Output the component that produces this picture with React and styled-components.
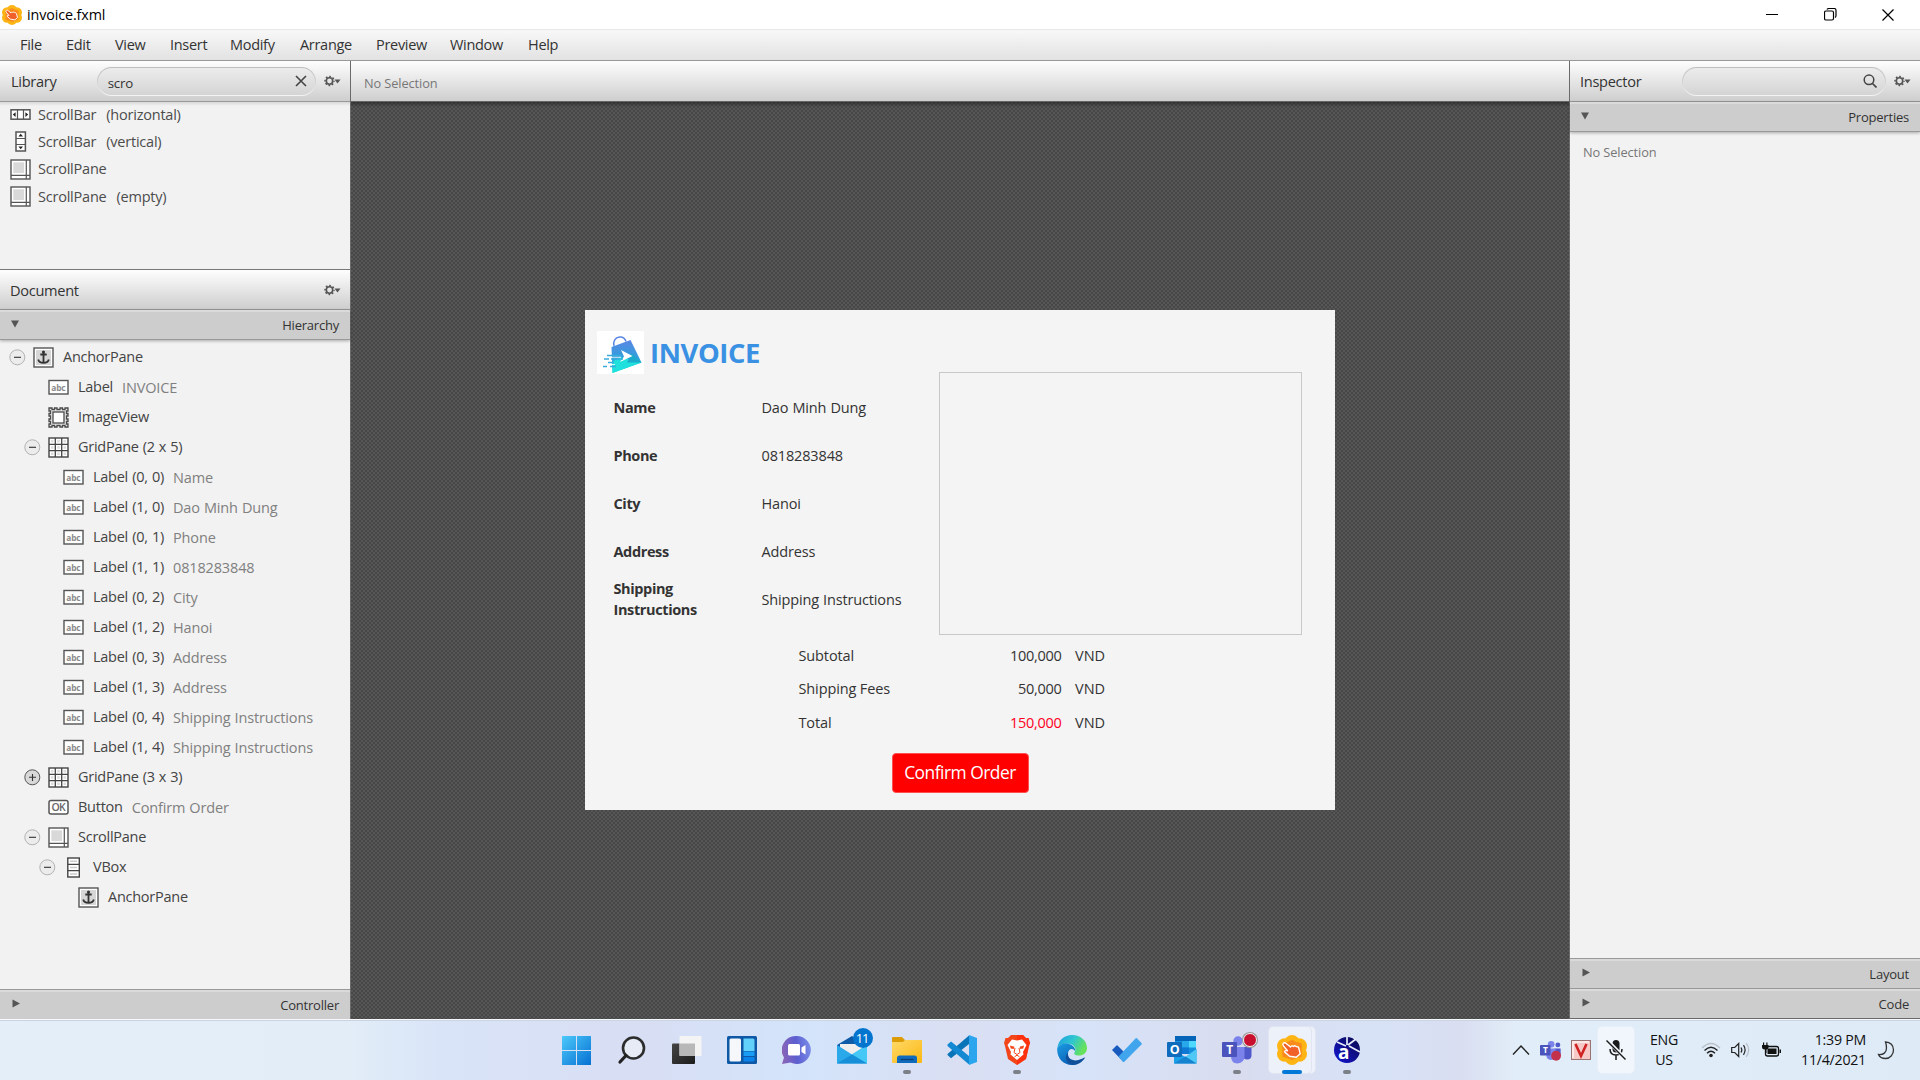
import React from "react";
import styled, { createGlobalStyle } from "styled-components";

const GlobalStyle = createGlobalStyle`
  * { box-sizing: border-box; }
  html, body { margin: 0; padding: 0; background: #fff; }
  body {
    width: 1920px; height: 1080px; overflow: hidden;
    font-family: "Open Sans", "Noto Sans", sans-serif;
    font-size: 14.5px; letter-spacing: -0.35px; color: #444; line-height: 20px;
    white-space: pre;
  }
  svg { display: block; flex: none; }
`;

/* ---------- window frame ---------- */
const Window = styled.div`
  width: 1920px; height: 1080px; display: flex; flex-direction: column;
`;
const TitleBar = styled.header`
  height: 29px; display: flex; align-items: center; background: #fff; color: #000;
  padding-left: 2px; padding-right: 3px; flex: none;
`;
const TitleText = styled.span`
  margin-left: 5px; flex: 1; font-size: 14.3px; letter-spacing: -0.1px; padding-top: 1px;
`;
const CaptionButton = styled.div`
  width: 58px; height: 29px; display: flex; align-items: center; justify-content: center;
`;
const MenuBar = styled.nav`
  height: 32px; flex: none; display: grid; align-items: center;
  grid-template-columns: 46px 49px 55px 60px 70px 76px 74px 78px 60px;
  padding-left: 20px; border-top: 1px solid #e8e8e8; border-bottom: 1px solid #999;
  background: linear-gradient(#f8f8f8, #e2e2e2); color: #333; letter-spacing: -0.3px;
`;
const Body = styled.div`
  flex: 1; display: flex; min-height: 0;
`;
const LeftPanel = styled.aside`
  width: 351px; flex: none; display: flex; flex-direction: column;
  border-right: 1px solid #6a6a6a; background: #f2f2f2;
`;
const RightPanel = styled.aside`
  width: 351px; flex: none; display: flex; flex-direction: column;
  border-left: 1px solid #6a6a6a; border-bottom: 1px solid #6a6a6a; background: #f2f2f2;
`;
const Center = styled.main`
  flex: 1; display: flex; flex-direction: column; min-width: 0;
`;

/* ---------- panel headers ---------- */
const PanelHeader = styled.div`
  height: ${p => p.$h || 41}px; flex: none; display: flex; align-items: center;
  padding: 0 8px; padding-left: ${p => p.$left || 10}px;
  background: linear-gradient(#fefefe, #cecece);
  border-bottom: 1px solid ${p => p.$edge || "#999"};
`;
const PanelTitle = styled.span`
  width: ${p => p.$w}px; color: #333; font-size: 14.6px; letter-spacing: -0.3px;
`;
const CrumbText = styled.span`
  font-size: 12.8px; color: #777; letter-spacing: -0.1px; padding-top: 3px;
`;
const SearchField = styled.div`
  width: ${p => p.$w}px; height: 29px; border-radius: 15px; padding: 1px; margin-right: 8px;
  background: linear-gradient(#bdbdbd, #d2d2d2 50%, #f4f4f4);
`;
const SearchInner = styled.div`
  height: 27px; border-radius: 14px; padding: 0 8px 0 10px;
  background: linear-gradient(#ececec, #d4d4d4);
  display: flex; align-items: center; justify-content: space-between;
  font-size: 13.3px; color: #333; letter-spacing: -0.2px;
  & > span { padding-top: 3px; }
`;
const Band = styled.div`
  height: ${p => p.$h || 30}px; flex: none; display: flex; align-items: center; justify-content: space-between;
  padding: 0 11px 1px 11px; background: #cdcdcd; color: #333;
  font-size: 13px; letter-spacing: -0.22px;
  border-top: 2px solid #dadada; border-bottom: ${p => (p.$last ? 0 : 1)}px solid #999;
  position: relative;
  box-shadow: ${p => (p.$open ? "0 1px 3px rgba(0,0,0,.3)" : "none")};
  & > svg { margin-top: -3px; }
`;
const TopLine = styled.div`
  height: 1px; flex: none; background: #999;
`;

/* ---------- library ---------- */
const LibraryList = styled.div`
  height: 168px; flex: none; border-bottom: 1px solid #777; letter-spacing: -0.22px;
  background: linear-gradient(#d8d8d8, #f2f2f2 4px);
  & > div:first-child { margin-top: -1px; }
  overflow: hidden;
`;
const LibraryRow = styled.div`
  height: 27.3px; display: flex; align-items: center; padding-left: 10px;
  color: #4c4c4c; gap: 7px;
`;
const Qualifier = styled.span`margin-left: 3px;`;

/* ---------- hierarchy ---------- */
const Tree = styled.div`
  flex: 1; padding-top: 2.5px; min-height: 0;
`;
const TreeRow = styled.div`
  height: 30px; display: flex; align-items: center; padding-left: ${p => 9 + p.$level * 15}px;
  color: #444;
`;
const Toggle = styled.div`
  width: 24px; flex: none;
`;
const NodeIcon = styled.div`
  width: 30px; flex: none;
`;
const NodeName = styled.span`
  padding-bottom: 1px; letter-spacing: -0.26px; word-spacing: ${p => (p.$coords ? 0.7 : 0.5)}px;
`;
const NodeInfo = styled.span`
  color: #808080; margin-left: 9px; padding-top: 1px; letter-spacing: -0.15px; word-spacing: 0.5px;
`;

/* ---------- canvas ---------- */
const Canvas = styled.div`
  flex: 1; display: flex; align-items: flex-start; justify-content: center; padding-top: 208px;
  background:
    linear-gradient(rgba(0,0,0,.35), transparent 5px),
    conic-gradient(#474747 25%, #565656 0 50%, #474747 0 75%, #565656 0) 0 0 / 4px 4px;
`;
const Dialog = styled.section`
  width: 750px; height: 500px; background: #f4f4f4; display: flex; flex-direction: column;
  color: #333;
`;
const DialogTop = styled.div`
  display: flex; height: 325px; flex: none;
`;
const Details = styled.div`
  width: 354px; flex: none; padding-top: 21px;
`;
const Brand = styled.div`
  display: flex; align-items: center; height: 43px; padding-left: 12px; gap: 6px;
  color: #3a91e3; font-weight: 700; font-size: 27.4px; letter-spacing: -0.4px;
`;
const Fields = styled.div`
  display: grid; grid-template-columns: 148px 1fr; grid-auto-rows: 48px; align-items: center;
  padding: 10px 0 0 28.5px;
`;
const FieldLabel = styled.span`
  font-weight: 700; line-height: 21px; letter-spacing: -0.38px; white-space: normal;
  width: 110px; padding-bottom: 1.2px;
`;
const FieldValue = styled.span`
  letter-spacing: -0.15px; word-spacing: 0.5px;
`;
const ScrollBox = styled.div`
  width: 363px; height: 263px; margin-top: 62px; border: 1px solid #c8c8c8;
`;
const Totals = styled.div`
  display: grid; grid-template-columns: 130px 133px 50px; grid-auto-rows: 33.5px;
  align-items: center; padding: 4px 0 0 213.5px; height: 118px; flex: none;
  letter-spacing: -0.12px;
`;
const Amount = styled.span`
  text-align: right; color: ${p => (p.$hot ? "#ff0022" : "inherit")}; letter-spacing: -0.3px;
`;
const Currency = styled.span`
  padding-left: 13.5px; letter-spacing: 0;
`;
const ConfirmButton = styled.button`
  width: 137px; height: 40px; margin-left: 306.500px; border: 1px solid #ff5050; border-radius: 4px;
  background: #f00; color: #fff; font: inherit; font-size: 17.4px; letter-spacing: -0.5px;
  padding: 0 0 2px;
`;

/* ---------- inspector ---------- */
const InspectorBody = styled.div`
  flex: 1; padding: 10px 13px; font-size: 12.8px; letter-spacing: -0.1px; color: #777;
`;

/* ---------- taskbar ---------- */
const Taskbar = styled.footer`
  height: 61px; flex: none; display: flex; align-items: stretch; padding-left: 549px;
  border-top: 1px solid #f5f8fc; color: #1a1a1a;
  background: linear-gradient(90deg, #e3eef9 0, #e2edf8 350px, #d9e4f8 440px, #d8def4 640px,
    #d3e4fa 800px, #dadff3 960px, #d6e3f8 1080px, #d9dcef 1240px, #d7e2f7 1370px, #d9def1 1460px,
    #e1edf8 1515px, #deebf7 1920px);
  box-shadow: inset 0 1px 0 #ccd4e2;
`;
const Slot = styled.div`
  width: 55px; flex: none; display: flex; justify-content: center; padding-top: 15px;
  position: relative;
`;
const ActiveCard = styled.div`
  position: absolute; left: ${p => p.$x}px; top: 6px; width: 44px; height: 48px; border-radius: 5px;
  background: #edf1fa; border: 1px solid #e0e5f1;
`;
const SlotIcon = styled.div`
  position: relative; height: 30px;
`;
const Indicator = styled.div`
  position: absolute; left: 50%; bottom: 6px; height: 4px; border-radius: 2px;
  width: ${p => (p.$active ? 20 : 8)}px; margin-left: ${p => (p.$active ? -10 : -4)}px;
  background: ${p => (p.$active ? "#0078d7" : "#7c8088")};
`;
const Badge = styled.div`
  position: absolute; top: -7px; right: -6px; width: 20px; height: 20px; border-radius: 50%;
  background: #0375cf; color: #fff; font-size: 13px; line-height: 20px; text-align: center;
  letter-spacing: -1.2px; padding-right: 1px;
`;
const RecordBadge = styled.div`
  position: absolute; top: -2px; right: -5px; width: 14px; height: 14px; border-radius: 50%;
  background: #c8102e; border: 1px solid #f3f3f3; box-shadow: 0 0 0 1px #999;
`;
const Tray = styled.div`
  margin-left: auto; display: flex; align-items: center; padding-right: 25px;
`;
const TrayItem = styled.div`
  width: ${p => p.$w}px; display: flex; justify-content: center; flex: none;
`;
const MicCard = styled.div`
  width: 38px; height: 48px; border-radius: 5px; background: #f1f6fd; border: 1px solid #e8eff8;
  display: flex; align-items: center; justify-content: center; margin: 0 15px 0 5px;
`;
const TrayText = styled.div`
  font-size: 14.2px; letter-spacing: ${p => p.$ls || -0.35}px; line-height: 20px; color: #111;
  text-align: ${p => p.$align || "center"}; width: ${p => p.$w}px; margin-right: ${p => p.$mr}px;
`;

/* ---------- small icons ---------- */
const Gear = () => (
  <svg width="18" height="12" viewBox="0 0 18 12">
    <circle cx="5.5" cy="6" r="3.2" fill="none" stroke="#555" strokeWidth="1.6" />
    <circle cx="5.5" cy="6" r="4.5" fill="none" stroke="#555" strokeWidth="1.5" strokeDasharray="1.7 1.834" strokeDashoffset="0.85" />
    <path d="M10.5 4.5h6l-3 4z" fill="#555" />
  </svg>
);
const Down = () => <svg width="9" height="8"><path d="M0 0.5h8l-4 7z" fill="#555" /></svg>;
const RightTri = () => <svg width="10" height="9"><path d="M1.5 0.5v8l7.5-4z" fill="#555" /></svg>;

const TreeToggle = ({ open }) => (
  <svg width="17" height="17" viewBox="0 0 17 17">
    <circle cx="8.3" cy="8.3" r="7.5" fill={open ? "#ececec" : "#d8d8d8"} stroke={open ? "#b2b2b2" : "#555"} />
    <path d={open ? "M5 8.3h7" : "M5 8.3h7M8.5 5v7"} stroke="#333" strokeWidth="1.1" />
  </svg>
);

const smallIcons = {
  anchor: (
    <g>
      <rect x="1" y="1" width="19" height="19" fill="#fff" stroke="#555" strokeWidth="1.4" />
      <rect x="3" y="3" width="15" height="15" fill="#d6d6d6" />
      <path d="M10.500 4v12M7.300 7.500h6.400M5.200 12.500q.8 3.300 5.300 3.300t5.300-3.300" fill="none" stroke="#333" strokeWidth="1.800" />
      <circle cx="10.500" cy="5" r="1.500" fill="#333" />
    </g>
  ),
  label: (
    <g>
      <rect x="1" y="3.5" width="19" height="13.5" fill="#fff" stroke="#555" strokeWidth="1.4" />
      <text x="10.4" y="13.8" textAnchor="middle" fontSize="8.4" fontWeight="700" fill="#8a8a8a" letterSpacing="-0.2">abc</text>
    </g>
  ),
  button: (
    <g>
      <rect x="1" y="3.5" width="19" height="13.5" rx="2" fill="#fff" stroke="#555" strokeWidth="1.5" />
      <text x="10.3" y="14.2" textAnchor="middle" fontSize="10.5" fontWeight="600" fill="#666" letterSpacing="-0.8">OK</text>
    </g>
  ),
  image: (
    <g>
      <path d="M1 1h3v1.500h2.500V1h2.500v1.500h3V1h2.500v1.500H17V1h3v3h-1.500v2.500H20V9h-1.500v3H20v2.500h-1.500V17H20v3h-3v-1.500h-2.500V20H12v-1.500H9V20H6.500v-1.500H4V20H1v-3h1.500v-2.500H1V12h1.500V9H1V6.500h1.500V4H1z" fill="#e4e4e4" stroke="#4a4a4a" strokeWidth="1.300" />
      <rect x="5" y="5" width="11" height="11" fill="#fff" stroke="#4a4a4a" strokeWidth="1.300" />
    </g>
  ),
  grid: (
    <g>
      <rect x="1" y="1" width="19" height="19" fill="#fff" stroke="#444" strokeWidth="1.4" />
      <path d="M7.3 1v19M13.7 1v19M1 7.3h19M1 13.7h19" stroke="#444" strokeWidth="1.3" />
      <path d="M2.9 4.2h2.6M9.2 4.2h2.6M15.5 4.2h2.6M2.9 10.5h2.6M9.2 10.5h2.6M15.5 10.5h2.6M2.9 16.8h2.6M9.2 16.8h2.6M15.5 16.8h2.6" stroke="#ddd" strokeWidth="2.4" />
    </g>
  ),
  scroll: (
    <g>
      <rect x="1" y="1" width="19" height="19" fill="#fff" stroke="#555" strokeWidth="1.4" />
      <path d="M16.3 1v19M1 16.3h19" stroke="#555" strokeWidth="1.2" />
      <rect x="3.3" y="3.3" width="10.8" height="10.8" fill="#d9d9d9" />
    </g>
  ),
  vbox: (
    <g>
      <rect x="4.8" y="1" width="11.5" height="19" fill="#fff" stroke="#444" strokeWidth="1.4" />
      <path d="M4.8 7.4h11.5M4.8 13.7h11.5" stroke="#444" strokeWidth="1.3" />
      <path d="M7 4.2h7M7 10.5h7M7 16.9h7" stroke="#ccc" strokeWidth="1.5" />
    </g>
  ),
  hbar: (
    <g>
      <rect x="1" y="5.8" width="19" height="9.4" fill="#fff" stroke="#555" strokeWidth="1.5" />
      <path d="M7.5 6v9M13.5 6v9" stroke="#555" strokeWidth="1.2" />
      <path d="M5.6 8.3v4.600l-2.800-2.300zM15.400 8.300v4.600l2.800-2.300z" fill="#222" />
    </g>
  ),
  vbar: (
    <g>
      <rect x="6" y="1" width="9.4" height="19" fill="#fff" stroke="#555" strokeWidth="1.5" />
      <path d="M6 7.5h9M6 13.5h9" stroke="#555" strokeWidth="1.2" />
      <path d="M8.4 5.600h4.600l-2.300-2.800zM8.400 15.400h4.600l-2.300 2.800z" fill="#222" />
    </g>
  ),
};
const SmallIcon = ({ kind }) => <svg width="21" height="21" viewBox="0 0 21 21">{smallIcons[kind]}</svg>;

/* ---------- logos ---------- */
const SceneLogo = ({ size }) => (
  <svg width={size} height={size} viewBox="0 0 30 30">
    <g fill="#fdb515">
      <circle cx="15" cy="7.500" r="7.500" /><circle cx="15" cy="22.500" r="7.500" />
      <circle cx="7.700" cy="11" r="7.700" /><circle cx="22.300" cy="11" r="7.700" />
      <circle cx="7.700" cy="19" r="7.700" /><circle cx="22.300" cy="19" r="7.700" />
    </g>
    <path d="M15 4.500q3 2.500 9.500 3.500.8 4 0 7 .8 3 0 7-6.500 1-9.500 3.500-3-2.500-9.500-3.500-.8-4 0-7-.8-3 0-7 6.500-1 9.500-3.500z" fill="#fa8c1e" />
    <path d="M6.300 8.300c1-1 2.100-.5 3.200.4l4 3.300c.8-1.500 2-1.400 2.900-.6 1-.9 2.200-.7 2.900.3 1.300-.4 2.200.3 2.500 1.500l1.400 5.600-3.900 3.500-6.700-1.100-5-4.300c.1-1.400 1.400-1.700 2.900-1.100l-4-4.900c-.8-1-1-1.900-.2-2.600z" fill="#f2602a" stroke="#fff" strokeWidth="1.400" strokeLinejoin="round" />
  </svg>
);
const BagLogo = () => (
  <svg width="47" height="43" viewBox="0 0 47 43">
    <defs>
      <linearGradient id="bag" x1="0" y1="0" x2="0" y2="1">
        <stop offset="0" stopColor="#5a86e4" /><stop offset=".55" stopColor="#2fa0dc" /><stop offset="1" stopColor="#14e6d8" />
      </linearGradient>
    </defs>
    <rect width="47" height="43" fill="#fff" />
    <path d="M17 15c-1-5 1-8.5 5.5-9 3-.3 5.500 1.500 6.500 4.500" fill="none" stroke="#5a86e4" strokeWidth="1.500" />
    <path d="M14.500 16l19-7 11 22.500-29 10.500z" fill="url(#bag)" />
    <path d="M15 31l8-5 21.500 5.500-29 10.500z" fill="#1fe0dc" />
    <path d="M30 31.500l14.500 0-10-9z" fill="#1ba9cc" />
    <path d="M24 19l11.500 6-12.500 6 4-5.500z" fill="#fff" />
    <path d="M10 24.500h15M7 28h5M14 28h12M11 31.500h6M6 35.500h4M13 35.500h6" stroke="#38aadd" strokeWidth="1.700" />
    <path d="M14 26.300h10M13 33.500h5" stroke="#fff" strokeWidth=".8" />
  </svg>
);

const WindowsLogo = () => (
  <svg width="30" height="30" viewBox="0 0 30 30">
    <defs><linearGradient id="win" x1="0" y1="0" x2="1" y2="1"><stop offset="0" stopColor="#4cc9fb" /><stop offset="1" stopColor="#0670d2" /></linearGradient></defs>
    <path d="M0 1.500q0-.5.5-.5h13.500v14H0zM15 1H28.500q.5 0 .5.500V15h-14zM0 16h14v14H.5q-.5 0-.5-.5zM15 16h14v13.500q0 .5-.5.5H15z" fill="url(#win)" />
  </svg>
);
const SearchLogo = () => (
  <svg width="30" height="30" viewBox="0 0 30 30">
    <circle cx="16.500" cy="13" r="10.500" fill="#e6ebf6" stroke="#2c2c2c" strokeWidth="2.600" />
    <path d="M9 20.500L3 27" stroke="#222" strokeWidth="3.200" strokeLinecap="round" />
  </svg>
);
const TaskViewLogo = () => (
  <svg width="30" height="30" viewBox="0 0 30 30">
    <defs><linearGradient id="tv" x1="0" y1="0" x2="1" y2="1"><stop offset="0" stopColor="#444" /><stop offset="1" stopColor="#1c1c1c" /></linearGradient></defs>
    <rect x="0" y="8.500" width="23" height="20.500" rx="1" fill="url(#tv)" />
    <rect x="7.500" y="1" width="22" height="20" rx="1" fill="#f4f4f4" />
    <rect x="7.500" y="8.500" width="15.500" height="12.500" fill="#b8b8b8" />
  </svg>
);
const WidgetsLogo = () => (
  <svg width="30" height="30" viewBox="0 0 30 30">
    <rect x="0" y="1" width="30" height="28" rx="1.500" fill="#0f58a5" />
    <rect x="2.500" y="3.500" width="11.500" height="23" rx="1.500" fill="#f5f7fa" />
    <path d="M16.500 3.500h9.500q1.500 0 1.500 1.500v11h-11z" fill="#62d2fb" />
    <rect x="16.500" y="16.500" width="11" height="4.500" fill="#1a9df4" />
    <path d="M16.500 22h11v3q0 1.500-1.500 1.500h-9.500z" fill="#0a84ea" />
  </svg>
);
const ChatLogo = () => (
  <svg width="30" height="30" viewBox="0 0 30 30">
    <defs><linearGradient id="chat" x1="0" y1="0.500" x2="1" y2=".4"><stop offset="0" stopColor="#8a64b8" /><stop offset=".5" stopColor="#5c5fd0" /><stop offset="1" stopColor="#7b8de8" /></linearGradient></defs>
    <path d="M14.500 1a14 14 0 1 1-6 26.500L0 29l2-6.500A14 14 0 0 1 14.500 1z" fill="url(#chat)" />
    <rect x="6" y="9" width="12" height="11.500" rx="1.500" fill="#fff" />
    <path d="M19.500 12.500l4-2.500v9.500l-4-2.500z" fill="#fff" />
  </svg>
);
const MailLogo = () => (
  <svg width="30" height="30" viewBox="0 0 30 30">
    <path d="M0 10L15 1l15 9v4H0z" fill="#0f5ba8" />
    <path d="M3 9h24v10H3z" fill="#eee" />
    <path d="M0 10l15 9.500L30 10v18.500H0z" fill="#2aa9ea" />
    <path d="M30 10L15 19.500l15 9z" fill="#45c8f5" />
    <path d="M0 28.500l15-9 15 9z" fill="#168fd8" />
  </svg>
);
const FolderLogo = () => (
  <svg width="30" height="30" viewBox="0 0 30 30">
    <defs><linearGradient id="fold" x1="0" y1="0" x2="1" y2="1"><stop offset="0" stopColor="#ffd968" /><stop offset="1" stopColor="#fbb813" /></linearGradient></defs>
    <path d="M0 3q0-1 1-1h9l3 3h16q1 0 1 1v5H0z" fill="#dd9b06" />
    <path d="M0 7h11l2-2h17v22q0 1-1 1H1q-1 0-1-1z" fill="url(#fold)" />
    <path d="M5 28v-5q0-2.500 2.500-2.500h15Q25 20.500 25 23v5z" fill="#0f6cbd" />
    <path d="M8.500 24.500h13" stroke="#0a3f75" strokeWidth="1.300" />
  </svg>
);
const CodeLogo = () => (
  <svg width="30" height="30" viewBox="0 0 30 30">
    <path d="M.5 20l3.500 3.200L22 9V.5L.5 19z" fill="#0a74b8" />
    <path d="M.5 9.500L4 6.500 22 21v8.500L.5 11z" fill="#1289d2" />
    <path d="M22 0l8 3v24l-8 3z" fill="#2ba5ee" />
  </svg>
);
const BraveLogo = () => (
  <svg width="30" height="30" viewBox="0 0 30 30">
    <path d="M9 0h12l3 3 2.500 0L28 8l-1 3-3 13-9 6-9-6L3 11 2 8l1.500-5L6 3z" fill="#f3451a" />
    <path d="M15 0h6l3 3 2.500 0L28 8l-1 3-3 13-9 6z" fill="#ff2a0a" opacity=".7" />
    <path d="M10 4.500l5 1 5-1 4.500 5.500-3.500 7 .5 2.500-3 2.500-3.500 3-3.500-3-3-2.500.5-2.500-3.500-7z" fill="#fff" />
    <path d="M8 10.500l4.500 1.300-.8 2.200-3-.6zM22 10.500l-4.500 1.300.8 2.200 3-.6z" fill="#f3451a" />
    <path d="M13 13l-1 4.500 3 2 3-2-1-4.500M12.500 21.800l2.500-1.600 2.500 1.600" fill="none" stroke="#f3451a" strokeWidth="1" />
  </svg>
);
const EdgeLogo = () => (
  <svg width="30" height="30" viewBox="0 0 30 30">
    <defs>
      <linearGradient id="e1" x1="0" y1="0" x2="1" y2=".4"><stop offset="0" stopColor="#1b9de2" /><stop offset=".55" stopColor="#30c6d0" /><stop offset="1" stopColor="#66e25a" /></linearGradient>
      <linearGradient id="e2" x1="0" y1="0" x2="0.600" y2="1"><stop offset="0" stopColor="#1b9de2" /><stop offset="1" stopColor="#0c5fb5" /></linearGradient>
    </defs>
    <path d="M.3 13C1.500 5 7.500 0 15 0c9 0 15 6 15 13 0 5-4 7.500-8 7.500-4 0-5.500-1.500-4.500-3 2-3 .5-7.500-5-8.500C7 8 2 9.500.3 13z" fill="url(#e1)" />
    <path d="M.3 13C2 9.500 7 7.500 12 9c4 1.200 6.500 4 6 7-2-3.500-7.500-2.500-7 3.500.5 5 5 9 9.500 9.500C9 33-1 24 .3 13z" fill="url(#e2)" />
    <path d="M11 17.500c-1.500 6 5 9 10.500 7.500 3-.8 4.500-2 6-2.500.5 0 .5.300.2.800C25 27.500 20.500 30 15.500 30 10 29 6.500 22 11 17.500z" fill="#104f9a" />
  </svg>
);
const TodoLogo = () => (
  <svg width="30" height="30" viewBox="0 0 30 30">
    <path d="M0 15l4.500-4.500q.5-.5 1 0L16 21l-5 5.500z" fill="#185abd" />
    <path d="M6.500 21.500L23.500 3.500q.8-.8 1.600 0L29.500 8q.6.700 0 1.400L12.300 26.700q-.7.600-1.400 0z" fill="#41a5ee" />
  </svg>
);
const OutlookLogo = () => (
  <svg width="30" height="30" viewBox="0 0 30 30">
    <rect x="8" y="1" width="21" height="18" fill="#1490df" />
    <rect x="8" y="1" width="21" height="5" fill="#0364b8" />
    <rect x="15" y="6" width="7" height="6.500" fill="#28a8ea" /><rect x="22" y="6" width="7" height="6.500" fill="#50d9ff" />
    <rect x="15" y="12.500" width="7" height="6.500" fill="#0f78d4" />
    <path d="M7 15.500l11.500 6.500 11-8v14.500H7z" fill="#1aa0e8" />
    <path d="M18.500 22l11-8v14.500z" fill="#50c8f5" />
    <path d="M7 28.500l11.500-7 11 7z" fill="#1583d0" />
    <rect x="0" y="7" width="15" height="15" rx="1" fill="#0f6cbd" />
    <text x="7.500" y="19" textAnchor="middle" fontSize="12.500" fontWeight="700" fill="#fff">O</text>
  </svg>
);
const TeamsLogo = ({ size = 30, record }) => (
  <svg width={size} height={size} viewBox="0 0 30 30">
    <circle cx="16" cy="6" r="4.700" fill="#7b83eb" />
    <circle cx="25.500" cy="7" r="3.500" fill="#5059c9" />
    <path d="M21 12h8.500v8q0 4.500-4.500 4.500-4 0-4-4z" fill="#5059c9" />
    <path d="M9 12h13.500v9q0 7-7 7.500-6.500-.5-6.500-7z" fill="#7b83eb" />
    <rect x="0" y="7" width="15" height="15" rx="1" fill="#4b53bc" />
    <text x="7.500" y="18.500" textAnchor="middle" fontSize="12" fontWeight="700" fill="#fff">T</text>
    {record && <circle cx="23" cy="22.500" r="7" fill="#c4314b" />}
  </svg>
);
const AstahLogo = () => (
  <svg width="30" height="30" viewBox="0 0 30 30">
    <defs><linearGradient id="ast" x1="0" y1="1" x2="1" y2="0"><stop offset="0" stopColor="#1414d8" /><stop offset="1" stopColor="#0a0a48" /></linearGradient></defs>
    <circle cx="15" cy="15" r="13" fill="url(#ast)" />
    <path d="M15 2v8M16 10l8-6M17 11l11 6M5 7l9 4" fill="none" stroke="#e8ecf8" strokeWidth="1.700" />
    <text x="11.500" y="23.500" textAnchor="middle" fontSize="19" fontWeight="700" fill="#fff">a</text>
  </svg>
);

const treeRows = [
  { level: 0, open: true, icon: "anchor", name: "AnchorPane" },
  { level: 1, icon: "label", name: "Label", info: "INVOICE" },
  { level: 1, icon: "image", name: "ImageView" },
  { level: 1, open: true, icon: "grid", name: "GridPane (2 x 5)" },
  { level: 2, icon: "label", name: "Label (0, 0)", info: "Name" },
  { level: 2, icon: "label", name: "Label (1, 0)", info: "Dao Minh Dung" },
  { level: 2, icon: "label", name: "Label (0, 1)", info: "Phone" },
  { level: 2, icon: "label", name: "Label (1, 1)", info: "0818283848" },
  { level: 2, icon: "label", name: "Label (0, 2)", info: "City" },
  { level: 2, icon: "label", name: "Label (1, 2)", info: "Hanoi" },
  { level: 2, icon: "label", name: "Label (0, 3)", info: "Address" },
  { level: 2, icon: "label", name: "Label (1, 3)", info: "Address" },
  { level: 2, icon: "label", name: "Label (0, 4)", info: "Shipping Instructions" },
  { level: 2, icon: "label", name: "Label (1, 4)", info: "Shipping Instructions" },
  { level: 1, open: false, icon: "grid", name: "GridPane (3 x 3)" },
  { level: 1, icon: "button", name: "Button", info: "Confirm Order" },
  { level: 1, open: true, icon: "scroll", name: "ScrollPane" },
  { level: 2, open: true, icon: "vbox", name: "VBox" },
  { level: 3, icon: "anchor", name: "AnchorPane" },
];
const fields = [
  ["Name", "Dao Minh Dung"], ["Phone", "0818283848"], ["City", "Hanoi"],
  ["Address", "Address"], ["Shipping Instructions", "Shipping Instructions"],
];
const totals = [["Subtotal", "100,000"], ["Shipping Fees", "50,000"], ["Total", "150,000"]];
const apps = [
  { el: <WindowsLogo /> }, { el: <SearchLogo /> }, { el: <TaskViewLogo /> }, { el: <WidgetsLogo /> },
  { el: <ChatLogo /> }, { el: <MailLogo />, badge: "11" }, { el: <FolderLogo />, running: true },
  { el: <CodeLogo /> }, { el: <BraveLogo />, running: true }, { el: <EdgeLogo /> }, { el: <TodoLogo /> },
  { el: <OutlookLogo /> }, { el: <TeamsLogo />, running: true, record: true },
  { el: <SceneLogo size={30} />, running: true, active: true }, { el: <AstahLogo />, running: true },
];

export default function App() {
  return (
    <Window>
      <GlobalStyle />
      <TitleBar>
        <SceneLogo size={20} />
        <TitleText>invoice.fxml</TitleText>
        <CaptionButton><svg width="12" height="12"><path d="M0 5.500h12" stroke="#000" /></svg></CaptionButton>
        <CaptionButton>
          <svg width="13" height="13"><rect x=".5" y="3" width="9" height="9" rx="1.500" fill="none" stroke="#000" strokeWidth="1.200" /><path d="M3 1.500Q3.500.5 5 .5h5Q12 .5 12 2.500v5q0 1.500-1 2" fill="none" stroke="#000" strokeWidth="1.200" /></svg>
        </CaptionButton>
        <CaptionButton><svg width="12" height="12"><path d="M.5.5l11 11M11.500.5l-11 11" stroke="#000" strokeWidth="1.200" /></svg></CaptionButton>
      </TitleBar>
      <MenuBar>
        {["File", "Edit", "View", "Insert", "Modify", "Arrange", "Preview", "Window", "Help"].map(m => <span key={m}>{m}</span>)}
      </MenuBar>
      <Body>
        <LeftPanel>
          <PanelHeader $left={11}>
            <PanelTitle $w={86}>Library</PanelTitle>
            <SearchField $w={220}>
              <SearchInner>
                <span>scro</span>
                <svg width="12" height="12"><path d="M1 1l10 10M11 1L1 11" stroke="#444" strokeWidth="1.600" /></svg>
              </SearchInner>
            </SearchField>
            <Gear />
          </PanelHeader>
          <LibraryList>
            <LibraryRow><SmallIcon kind="hbar" /><span>ScrollBar</span><Qualifier>(horizontal)</Qualifier></LibraryRow>
            <LibraryRow><SmallIcon kind="vbar" /><span>ScrollBar</span><Qualifier>(vertical)</Qualifier></LibraryRow>
            <LibraryRow><SmallIcon kind="scroll" /><span>ScrollPane</span></LibraryRow>
            <LibraryRow><SmallIcon kind="scroll" /><span>ScrollPane</span><Qualifier>(empty)</Qualifier></LibraryRow>
          </LibraryList>
          <PanelHeader $h={40}>
            <PanelTitle $w={315}>Document</PanelTitle>
            <Gear />
          </PanelHeader>
          <Band $open><Down />Hierarchy</Band>
          <Tree>
            {treeRows.map((r, i) => (
              <TreeRow key={i} $level={r.level}>
                <Toggle>{r.open !== undefined && <TreeToggle open={r.open} />}</Toggle>
                <NodeIcon><SmallIcon kind={r.icon} /></NodeIcon>
                <NodeName $coords={r.name.startsWith("Label (")}>{r.name}</NodeName>
                {r.info && <NodeInfo>{r.info}</NodeInfo>}
              </TreeRow>
            ))}
          </Tree>
          <TopLine />
          <Band $h={29} $last><RightTri />Controller</Band>
        </LeftPanel>
        <Center>
          <PanelHeader $left={13} $edge="#666"><CrumbText>No Selection</CrumbText></PanelHeader>
          <Canvas>
            <Dialog>
              <DialogTop>
                <Details>
                  <Brand><BagLogo /><span>INVOICE</span></Brand>
                  <Fields>
                    {fields.map(([k, v]) => (
                      <React.Fragment key={k}><FieldLabel>{k}</FieldLabel><FieldValue>{v}</FieldValue></React.Fragment>
                    ))}
                  </Fields>
                </Details>
                <ScrollBox />
              </DialogTop>
              <Totals>
                {totals.map(([k, v], i) => (
                  <React.Fragment key={k}><span>{k}</span><Amount $hot={i === 2}>{v}</Amount><Currency>VND</Currency></React.Fragment>
                ))}
              </Totals>
              <ConfirmButton>Confirm Order</ConfirmButton>
            </Dialog>
          </Canvas>
        </Center>
        <RightPanel>
          <PanelHeader>
            <PanelTitle $w={102}>Inspector</PanelTitle>
            <SearchField $w={204}>
              <SearchInner>
                <span />
                <svg width="14" height="14"><circle cx="6" cy="5.800" r="4.800" fill="none" stroke="#444" strokeWidth="1.500" /><path d="M9.500 9.500l4 4" stroke="#444" strokeWidth="1.700" /></svg>
              </SearchInner>
            </SearchField>
            <Gear />
          </PanelHeader>
          <Band $open><Down />Properties</Band>
          <InspectorBody>No Selection</InspectorBody>
          <TopLine />
          <Band><RightTri />Layout</Band>
          <Band $h={29} $last><RightTri />Code</Band>
        </RightPanel>
      </Body>
      <Taskbar>
        {apps.map((a, i) => (
          <Slot key={i}>
            {a.active && <><ActiveCard $x={8} /><ActiveCard $x={4} /></>}
            <SlotIcon>
              {a.el}
              {a.badge && <Badge>{a.badge}</Badge>}
              {a.record && <RecordBadge />}
            </SlotIcon>
            {a.running && <Indicator $active={a.active} />}
          </Slot>
        ))}
        <Tray>
          <TrayItem $w={20}><svg width="18" height="12"><path d="M1 10.500L9 2l8 8.500" fill="none" stroke="#222" strokeWidth="1.400" /></svg></TrayItem>
          <TrayItem $w={38}><TeamsLogo size={21} record /></TrayItem>
          <TrayItem $w={23}>
            <svg width="20" height="20"><rect x=".5" y=".5" width="19" height="19" fill="#f6c9c6" stroke="#9a7472" /><path d="M1 1h17v2H3v15H1z" fill="#fff" opacity=".6" /><path d="M4.500 4l5.500 12 5.500-12" fill="none" stroke="#cf2222" strokeWidth="2.600" /></svg>
          </TrayItem>
          <MicCard>
            <svg width="20" height="20"><rect x="6.500" y="0" width="7" height="12.500" rx="3.500" fill="#1a1a1a" /><path d="M4 9q0 6 6 6t6-6M10 15v5" fill="none" stroke="#1a1a1a" strokeWidth="1.500" /><path d="M1.500.5l18 18.500" stroke="#f1f6fd" strokeWidth="3.500" /><path d="M.5 .5l19 19" stroke="#1a1a1a" strokeWidth="1.400" /></svg>
          </MicCard>
          <TrayText $w={28} $mr={23}>{"ENG\nUS"}</TrayText>
          <TrayItem $w={20}>
            <svg width="20" height="16" fill="none"><path d="M1 6q9-9 18 0" stroke="#b8bfc8" strokeWidth="1.300" /><path d="M3.500 8.500q6.500-6.500 13 0M6 11.200q4-4 8 0" stroke="#222" strokeWidth="1.400" /><circle cx="10" cy="13.500" r="1.800" fill="#222" /></svg>
          </TrayItem>
          <TrayItem $w={40}>
            <svg width="20" height="16" fill="none" stroke="#222" strokeWidth="1.200"><path d="M.7 5.500h3l4-4v13l-4-4h-3z" /><path d="M10 5.500q1.700 2.500 0 5M12.500 3.200q3.200 4.800 0 9.600" /><path d="M15.200 1.200q5 6.800 0 13.600" stroke="#b8bfc8" /></svg>
          </TrayItem>
          <TrayItem $w={20}>
            <svg width="20" height="16"><rect x="4.500" y="4.500" width="13" height="9.500" rx="2" fill="none" stroke="#111" strokeWidth="1.300" /><rect x="6.500" y="6.500" width="9" height="5.500" fill="#111" /><path d="M18.500 7.500h1.500v3.500h-1.500zM1 3h6.500v2.500q0 2-2 2V11H4V7.500Q1 7.500 1 5zM2 .5h1.200V3H2zM5.300.5h1.200V3H5.300z" fill="#111" /></svg>
          </TrayItem>
          <TrayText $w={85} $mr={11} $align="right" $ls={-0.25}>{"1:39 PM\n11/4/2021"}</TrayText>
          <svg width="18" height="19"><path d="M8.500 1c5 0 8 3.500 8 8s-3.500 8.500-8 8.500c-3 0-6-1.500-7-4 5 .5 8-2 8-6.500 0-2.500-.5-4.500-1-6z" fill="none" stroke="#333" strokeWidth="1.300" /></svg>
        </Tray>
      </Taskbar>
    </Window>
  );
}
